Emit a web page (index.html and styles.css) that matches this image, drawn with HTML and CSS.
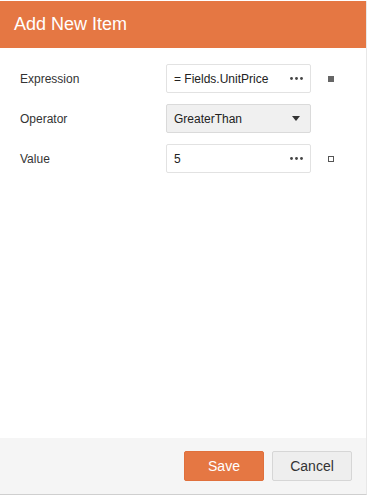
FILE: index.html
```html
<!DOCTYPE html>
<html>
<head>
<meta charset="utf-8">
<link rel="stylesheet" href="styles.css">
</head>
<body>
<div class="dialog">
  <div class="header">Add New Item</div>
  <div class="content">
    <div class="row">
      <div class="label">Expression</div>
      <div class="field">
        <span class="value">= Fields.UnitPrice</span>
        <svg class="dots" width="13" height="3" viewBox="0 0 13 3"><circle cx="1.5" cy="1.5" r="1.4" fill="#444"/><circle cx="6.5" cy="1.5" r="1.4" fill="#444"/><circle cx="11.5" cy="1.5" r="1.4" fill="#444"/></svg>
      </div>
      <span class="marker filled"></span>
    </div>
    <div class="row">
      <div class="label">Operator</div>
      <div class="field select">
        <span class="value">GreaterThan</span>
        <svg class="caret" width="8" height="5" viewBox="0 0 8 5"><path d="M0 0 H8 L4 5 Z" fill="#333"/></svg>
      </div>
    </div>
    <div class="row">
      <div class="label">Value</div>
      <div class="field">
        <span class="value">5</span>
        <svg class="dots" width="13" height="3" viewBox="0 0 13 3"><circle cx="1.5" cy="1.5" r="1.4" fill="#444"/><circle cx="6.5" cy="1.5" r="1.4" fill="#444"/><circle cx="11.5" cy="1.5" r="1.4" fill="#444"/></svg>
      </div>
      <span class="marker empty"></span>
    </div>
  </div>
  <div class="footer">
    <button class="btn save">Save</button>
    <button class="btn cancel">Cancel</button>
  </div>
</div>
</body>
</html>
```
FILE: styles.css
```css
html, body {
  margin: 0;
  padding: 0;
  background: #fff;
}
body {
  font-family: "Liberation Sans", Arial, sans-serif;
  font-size: 12px;
  color: #333;
}
.dialog {
  width: 367px;
  height: 494px;
  margin-top: 1px;
  border-right: 1px solid #e8e8e8;
  border-bottom: 1px solid #cfcfcf;
  display: flex;
  flex-direction: column;
  box-sizing: border-box;
}
.header {
  height: 47px;
  background: #e57743;
  color: #fff;
  font-size: 18px;
  line-height: 46px;
  padding-left: 14px;
  flex: none;
}
.content {
  flex: 1;
  padding-top: 16px;
  display: flex;
  flex-direction: column;
  gap: 11px;
}
.row {
  display: flex;
  align-items: center;
  height: 29px;
}
.label {
  width: 146px;
  padding-left: 20px;
  color: #333;
}
.field {
  width: 145px;
  height: 29px;
  box-sizing: border-box;
  border: 1px solid #e2e2e2;
  border-radius: 2px;
  background: #fff;
  display: flex;
  align-items: center;
  justify-content: space-between;
  padding: 0 7px 0 7px;
  color: #222;
}
.field.select {
  background: #f0f0f0;
  border-color: #dadada;
  padding-right: 10px;
}
.dots {
  display: block;
}
.marker {
  width: 6px;
  height: 6px;
  box-sizing: border-box;
  margin-left: 17px;
}
.marker.filled {
  background: #666;
}
.marker.empty {
  border: 1px solid #555;
}
.footer {
  height: 56px;
  flex: none;
  background: #f5f5f5;
  display: flex;
  align-items: center;
  justify-content: flex-end;
  gap: 8px;
  padding-right: 14px;
  box-sizing: border-box;
}
.btn {
  width: 80px;
  height: 30px;
  font-family: "Liberation Sans", Arial, sans-serif;
  font-size: 14px;
  border-radius: 2px;
  box-sizing: border-box;
  cursor: pointer;
}
.btn.save {
  background: #e57743;
  color: #fff;
  border: 1px solid #e0703c;
}
.btn.cancel {
  background: #eeeeee;
  color: #333;
  border: 1px solid #d6d6d6;
}
```
